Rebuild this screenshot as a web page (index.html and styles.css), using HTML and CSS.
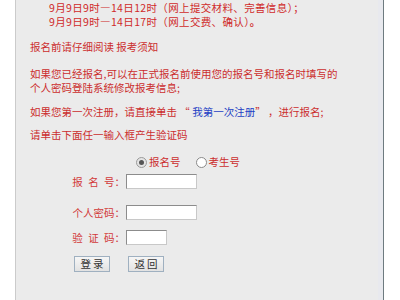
FILE: index.html
```html
<!DOCTYPE html>
<html lang="zh-CN">
<head>
<meta charset="utf-8">
<title>报名登录</title>
<link rel="stylesheet" href="styles.css">
</head>
<body>
<div class="panel">
  <div class="dates">
    <div>9月9日9时—14日12时（网上提交材料、完善信息）；</div>
    <div>9月9日9时—14日17时（网上交费、确认）<b class="dot">。</b></div>
  </div>
  <p class="p1">报名前请仔细阅读 报考须知</p>
  <p class="p2">如果您已经报名,可以在正式报名前使用您的报名号和报名时填写的<br>个人密码登陆系统修改报考信息;</p>
  <p class="p3">如果您第一次注册，请直接单击 “ <span class="link">我第一次注册</span>” ，进行报名;</p>
  <p class="p4">请单击下面任一输入框产生验证码</p>
  <div class="radios">
    <span class="radio on"></span><span class="rlabel">报名号</span>
    <span class="radio second"></span><span class="rlabel">考生号</span>
  </div>
  <div class="row r1"><span class="label">报 名 号：</span><span class="input"></span></div>
  <div class="row r2"><span class="label">个人密码：</span><span class="input"></span></div>
  <div class="row r3"><span class="label">验 证 码：</span><span class="input short"></span></div>
  <div class="buttons">
    <span class="btn">登录</span>
    <span class="btn">返回</span>
  </div>
</div>
</body>
</html>
```

FILE: styles.css
```css
html, body {
  margin: 0;
  padding: 0;
  background: #ffffff;
}
body {
  font-family: "Noto Sans CJK SC", "Noto Sans", sans-serif;
  font-size: 10.5px;
  line-height: 14px;
  color: #cc2e2e;
}
.panel {
  margin-left: 15px;
  width: 353px;
  height: 300px;
  overflow: hidden;
  background: #ebebeb;
  border-left: 1px solid #cbcbcb;
  border-right: 1px solid #6e7b80;
  box-shadow: inset -5px 0 0 #e8e9ee;
  padding-left: 14px;
  box-sizing: content-box;
}
.dates {
  padding-top: 1px;
  padding-left: 19px;
  color: #d02a2a;
  letter-spacing: 0.35px;
}
.dot { font-weight: bold; }
p { margin: 0; }
.p1 { margin-top: 11px; }
.p2 { margin-top: 13px; }
.p3 { margin-top: 10px; }
.p4 { margin-top: 9px; }
.link { color: #1d3fc4; }
.radios {
  margin-top: 13px;
  height: 14px;
  display: flex;
  align-items: center;
  padding-left: 106px;
}
.radio {
  width: 9px;
  height: 9px;
  border: 1px solid #8a8a8a;
  border-radius: 50%;
  background: #fff;
  position: relative;
  flex: none;
}
.radio.on { background: #e4e4e4; border-color: #9a9a9a; }
.radio.on::after {
  content: "";
  position: absolute;
  left: 2px;
  top: 2px;
  width: 5px;
  height: 5px;
  border-radius: 50%;
  background: #555;
}
.rlabel { margin-left: 2px; }
.radio.second { margin-left: 15px; }
.row {
  display: flex;
  align-items: center;
  height: 15px;
}
.r1 { margin-top: 5px; }
.r2 { margin-top: 16px; }
.r3 { margin-top: 10px; }
.label {
  width: 96px;
  text-align: right;
  padding-right: 1px;
  box-sizing: border-box;
  color: #d23a3a;
  word-spacing: 3px;
}
.input {
  width: 71px;
  height: 15px;
  box-sizing: border-box;
  background: #fff;
  border: 1px solid #8c8c8c;
  border-right-color: #c8c8c8;
  border-bottom-color: #c8c8c8;
}
.input.short { width: 41px; }
.buttons {
  margin-top: 11px;
  display: flex;
  gap: 18px;
  padding-left: 44px;
}
.btn {
  width: 36px;
  height: 16px;
  box-sizing: border-box;
  border: 1px solid #9fb0c0;
  background: linear-gradient(#f6f6f6, #e2e2e2);
  color: #333;
  text-align: center;
  line-height: 14px;
  letter-spacing: 2px;
  text-indent: 2px;
  font-size: 10.5px;
}
```
